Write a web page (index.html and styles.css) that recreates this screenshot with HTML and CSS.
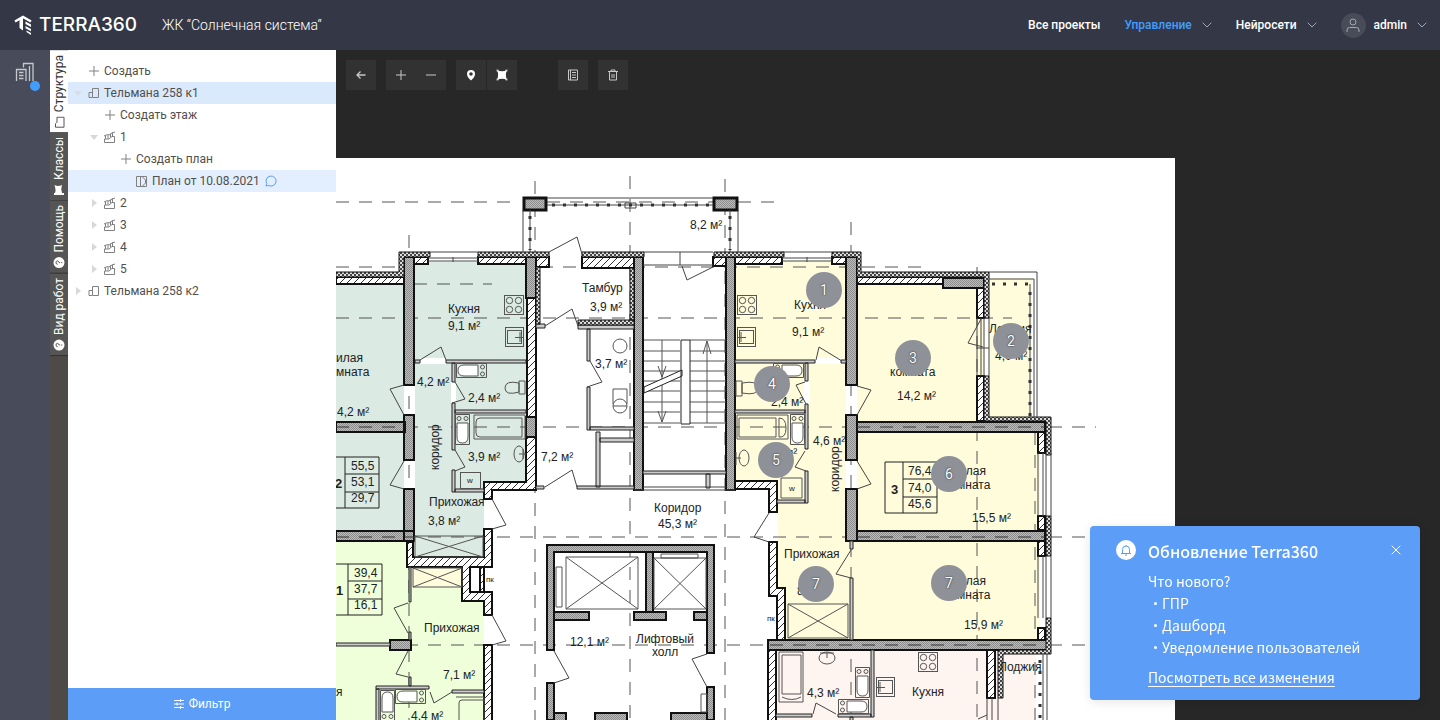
FILE: index.html
```html
<!DOCTYPE html>
<html lang="ru">
<head>
<meta charset="utf-8">
<meta name="viewport" content="width=device-width, initial-scale=1">
<title>Terra360</title>
<link rel="stylesheet" href="styles.css">
</head>
<body>
<svg class="defs" width="0" height="0" aria-hidden="true">
  <symbol id="i-plus" viewBox="0 0 12 12"><path d="M6 1v10M1 6h10" fill="none" stroke="currentColor"/></symbol>
  <symbol id="i-chevron" viewBox="0 0 10 6"><path d="M.7.7 5 5 9.300.7" fill="none" stroke="currentColor"/></symbol>
  <symbol id="i-house" viewBox="0 0 12 12"><path d="M4 10.500H1V5.500H4M4.500 10.500V1.500H10.500V10.500Z" fill="none" stroke="currentColor"/></symbol>
  <symbol id="i-floor" viewBox="0 0 12 12"><path d="M.5 8V11.500H10.500V5.500H8L5 8H.5M1.500 8V4.500M4 7.500V4M6.500 6V2.500M8.500 5V1.500M0 5 3.500 3.500 5 4 8 2 11 1" fill="none" stroke="currentColor"/></symbol>
  <symbol id="i-plan" viewBox="0 0 12 12"><path d="M.5 1.500H10.500V11.500H.5ZM4.500 1.500V11.500M6 1.500 9.500 5V8L6 11.500" fill="none" stroke="currentColor"/></symbol>
  <symbol id="i-area" viewBox="0 0 12 12"><path d="M1 1Q6 3.400 11 1Q8.800 6 11 11Q6 8.600 1 11Q3.200 6 1 1Z" fill="currentColor"/><path d="M.5.500h2v2h-2zM9.500.500h2v2h-2zM.5 9.500h2v2h-2zM9.500 9.500h2v2h-2z" fill="currentColor" opacity=".6"/></symbol>
  <symbol id="i-flag" viewBox="0 0 12 12"><path d="M1 1H3V2Q6 3.200 11 1.500Q9 5 11 9Q7 7.500 3 9V11H1Z" fill="currentColor"/></symbol>
  <symbol id="i-help" viewBox="0 0 12 12"><circle cx="6" cy="6" r="5.500" fill="#fff"/><path d="M4.300 4.700Q4.400 3 6 3T7.700 4.500Q7.700 5.400 6 6.200V7.200M6 8.200V9.300" fill="none" stroke="#555"/></symbol>
</svg>

<header class="topbar">
  <a class="logo" href="#">
    <svg class="logo-mark" width="20" height="20" viewBox="0 0 20 20" aria-hidden="true"><path d="M1 6.500 9 2 17 6.500" fill="none" stroke="#fff" stroke-width="2.400"/><path d="M5.500 4V13L9 15.500V2ZM11.500 6.500l5.500 3v2.400l-5.500-3zM11.500 11l5.500 3v2.200l-5.500-3zM12.500 15.500l4.500 2.500v2l-4.500-3z" fill="#fff"/></svg>
    <span>TERRA360</span>
  </a>
  <h1 class="project">ЖК “Солнечная система“</h1>
  <nav class="nav">
    <a href="#">Все проекты</a>
    <a href="#" class="current">Управление <svg class="chev" width="10" height="6"><use href="#i-chevron"/></svg></a>
    <a href="#">Нейросети <svg class="chev" width="10" height="6"><use href="#i-chevron"/></svg></a>
    <a href="#" class="user"><span class="avatar"><svg width="14" height="15" viewBox="0 0 14 15" aria-hidden="true"><circle cx="7" cy="4" r="3" fill="none" stroke="#a5a8b2"/><path d="M1 14V12Q1 9.500 3.500 9.500H10.500Q13 9.500 13 12V14" fill="none" stroke="#a5a8b2"/></svg></span>admin <svg class="chev" width="10" height="6"><use href="#i-chevron"/></svg></a>
  </nav>
</header>

<div class="workspace">
  <aside class="rail">
    <button class="rail-btn" aria-label="Объекты">
      <svg width="20" height="20" viewBox="0 0 20 20" aria-hidden="true"><path d="M1.500 19V7.500H11V19M8.500 5.500V1.500H18V19M14.500 4V19M4 10.500H8.500M4 13.500H8.500M4 16.500H8.500" fill="none" stroke="#c6c8ce" stroke-width="1.300"/></svg>
      <span class="dot"></span>
    </button>
  </aside>

  <div class="tabs" role="tablist">
    <button class="tab active" role="tab"><svg width="12" height="12" viewBox="0 0 12 12" aria-hidden="true"><path d="M1 2.500H4.500L6 4H11V11H1Z" fill="none" stroke="#555"/></svg>Структура</button>
    <button class="tab" role="tab"><svg width="12" height="12"><use href="#i-flag"/></svg>Классы</button>
    <button class="tab" role="tab"><svg width="12" height="12"><use href="#i-help"/></svg>Помощь</button>
    <button class="tab" role="tab"><svg width="12" height="12"><use href="#i-help"/></svg>Вид работ</button>
  </div>

  <section class="panel">
    <ul class="tree">
      <li class="row l0"><i class="arrow none"></i><svg width="12" height="12"><use href="#i-plus"/></svg>Создать</li>
      <li class="row l0 picked"><i class="arrow open pale"></i><svg width="12" height="12"><use href="#i-house"/></svg>Тельмана 258 к1</li>
      <li class="row l1"><i class="arrow none"></i><svg width="12" height="12"><use href="#i-plus"/></svg>Создать этаж</li>
      <li class="row l1"><i class="arrow open"></i><svg width="12" height="12"><use href="#i-floor"/></svg>1</li>
      <li class="row l2"><i class="arrow none"></i><svg width="12" height="12"><use href="#i-plus"/></svg>Создать план</li>
      <li class="row l3 chosen"><i class="arrow none"></i><svg width="12" height="12"><use href="#i-plan"/></svg>План от 10.08.2021 <svg class="note" width="12" height="12" viewBox="0 0 12 12" aria-hidden="true"><path d="M1 11L1.700 8.500A5 5 0 1 1 3.800 10.500Z" fill="none" stroke="#5d9df5"/></svg></li>
      <li class="row l1"><i class="arrow"></i><svg width="12" height="12"><use href="#i-floor"/></svg>2</li>
      <li class="row l1"><i class="arrow"></i><svg width="12" height="12"><use href="#i-floor"/></svg>3</li>
      <li class="row l1"><i class="arrow"></i><svg width="12" height="12"><use href="#i-floor"/></svg>4</li>
      <li class="row l1"><i class="arrow"></i><svg width="12" height="12"><use href="#i-floor"/></svg>5</li>
      <li class="row l0"><i class="arrow"></i><svg width="12" height="12"><use href="#i-house"/></svg>Тельмана 258 к2</li>
    </ul>
    <button class="filter"><svg width="10" height="10" viewBox="0 0 10 10" aria-hidden="true"><path d="M0 1.500H10M0 5H10M0 8.500H10M6.500 0V3M3 3.500V6.500M6.500 7V10" fill="none" stroke="#fff"/></svg>Фильтр</button>
  </section>

  <main class="viewer">
    <div class="tools">
      <div class="group"><button class="tool" aria-label="Назад"><svg width="12" height="12" viewBox="0 0 12 12"><path d="M10.500 6H2M5.500 2.500 2 6 5.500 9.500" fill="none" stroke="currentColor" stroke-width="1.300"/></svg></button></div>
      <div class="group"><button class="tool" aria-label="Приблизить"><svg width="12" height="12"><use href="#i-plus"/></svg></button><button class="tool" aria-label="Отдалить"><svg width="12" height="12" viewBox="0 0 12 12"><path d="M1 6H11" stroke="currentColor"/></svg></button></div>
      <div class="group split white"><button class="tool" aria-label="Точка"><svg width="12" height="12" viewBox="0 0 12 12"><path fill-rule="evenodd" d="M6 1A4 4 0 0 1 10 5Q10 8 6 11.500Q2 8 2 5A4 4 0 0 1 6 1ZM6 3.200A1.800 1.800 0 1 0 6 6.800A1.800 1.800 0 1 0 6 3.200Z" fill="currentColor"/></svg></button><button class="tool" aria-label="Область"><svg width="12" height="12"><use href="#i-area"/></svg></button></div>
      <div class="group far"><button class="tool" aria-label="Журнал"><svg width="12" height="12" viewBox="0 0 12 12"><path d="M1.500 1H10.500V11H1.500ZM3.500 1V11M5 3.500H9M5 6H9M5 8.500H9" fill="none" stroke="currentColor"/></svg></button></div>
      <div class="group"><button class="tool" aria-label="Удалить"><svg width="12" height="12" viewBox="0 0 12 12"><path d="M1 2.500H11M4 2.500V1H8V2.500M2.500 3V11H9.500V3M5 5V9M7 5V9" fill="none" stroke="currentColor"/></svg></button></div>
    </div>

    <div class="plan">
      <svg class="sheet" width="839" height="562" viewBox="336 158 839 562" role="img" aria-label="План этажа">
        <defs>
          <pattern id="g" width="2" height="2" patternUnits="userSpaceOnUse"><rect width="2" height="2" fill="#bcbcbc"/><path d="M0 0h1v1H0zM1 1h1v1H1z" fill="#8c8c8c"/></pattern>
          <pattern id="d" width="7" height="7" patternUnits="userSpaceOnUse"><rect width="7" height="7" fill="#fff"/><path d="M-1 8 8-1M-1 1 1-1M6 8 8 6" stroke="#333"/></pattern>
          <pattern id="o" width="4" height="4" patternUnits="userSpaceOnUse"><rect width="4" height="4" fill="#ddd"/><path d="M0 0h2v2H0zM2 2h2v2H2z" fill="#444"/></pattern>
          <g id="stove"><rect x=".5" y=".5" width="19" height="19"/><circle cx="5.500" cy="5.500" r="3.200"/><circle cx="14.500" cy="5.500" r="3.200"/><circle cx="5.500" cy="14.500" r="3.200"/><circle cx="14.500" cy="14.500" r="3.200"/></g>
          <g id="sink"><rect x=".5" y=".5" width="18" height="19"/><rect x="2.500" y="3.500" width="14" height="13"/><path d="M10 10.500H18M15 5V15"/></g>
          <g id="w"><rect x=".5" y=".5" width="20" height="16"/></g>
          <g id="tub"><path d="M.5.500H30.500V14.500H.5Z"/><path d="M22 2H8Q2 2 2 7.500T8 13H22Z" fill="#fff"/><circle cx="26.500" cy="4" r="2"/><circle cx="26.500" cy="11" r="2"/></g>
        </defs>
        <rect x="336" y="158" width="839" height="562" fill="#fff"/>

        <path class="mint" d="M336 284H404V262H530V486H484V557H412V534H336Z"/>
        <path class="lime" d="M336 540H410V587H463V600H484V720H336Z"/>
        <path class="cream" d="M412 568H462V587H412ZM735 262H846V284H978V278H1032V420H1040V642H777V590H777V486H735Z"/>
        <path class="rose" d="M776 650H1036V720H776Z"/>
        <path fill="#fff" d="M404 385h11v30h-11zM404 460h11v29h-11zM451 382h5v21h-5zM846 385h11v30h-11zM846 460h11v29h-11zM420 358h26v6h-26zM816 358h26v6h-26zM804 382h6v22h-6zM769 512h9v30h-9zM484 499h8v30h-8zM984 318h5v58h-5z"/>

        <g class="axis">
          <path d="M336 202H520M547 202H713M738 202H775M336 267H396M540 267H925M414 284H492M336 318H1012M336 427H1096M336 537H1100M336 645H1100"/>
          <path d="M409 235V720M535 181V720M630 176V720M725 179V720M851 222V720M977 267V720M1035 432V720"/>
        </g>

        <g class="grey">
          <path d="M404 257h10v128h-10zM404 415h10v45h-10zM404 489h10v52h-10zM336 422h69v10h-69zM336 531h78v10h-78zM526 257h10v41h-10zM526 417h10v20h-10zM634 257h9v233h-9zM726 257h9v233h-9zM846 257h11v128h-11zM846 415h11v45h-11zM846 489h11v52h-11zM943 278h41v10h-41zM857 422h188v10h-188zM857 531h188v10h-188zM768 640h280v10h-280zM390 640h21v10h-21z"/>
          <path d="M547 545H714V653H707V552H554V650H547ZM547 683h7v37h-7zM707 687h7v33h-7zM646 552h7v60h-7zM554 612h35v8h-35zM634 612h32v8h-32zM694 612h13v8h-13zM554 713h12v10h-12zM595 713h32v10h-32zM671 713h36v10h-36z"/>
          <path class="post" d="M524 198h22v12h-22zM714 198h23v12h-23z"/>
        </g>
        <path class="axis-thin" d="M336 427H404M857 427H1045M336 537H414M857 537H1045M770 645H1045"/>
        <g class="diag">
          <path d="M414 257h14v7h-14zM478 257h48v7h-48zM336 277h68v7h-68zM527 298h9v119h-9zM526 437h10v53H492v9h-8v-17h42zM484 529h8v38h-22v25h22v23h-8v-14h-22v-34h-55v-25h6v15h71zM480 567h4v25h-4zM484 645h8v78h-8zM536 257h13v10h-13zM582 257h52v11h-52zM735 257h47v7h-47zM832 257h14v7h-14zM713 257h13v9h-13zM857 277h86v7h-86zM977 288h7v30h-7zM977 376h7v45h-7zM1038 432h7v21h-7zM1038 516h7v14h-7zM1038 541h7v15h-7zM1038 628h7v12h-7z"/>
          <path d="M735 481h42v31h-8v-23h-34zM769 542h8v46h8v52h-8v-44h-8zM768 650h8v73h-8zM987 650h8v48h-8z"/>
        </g>
        <g class="slim">
          <path d="M415 360h5v3h-5zM446 360h80v3h-80zM452 363h3v19h-3zM452 403h3v47h-3zM455 410h71v3h-71zM452 470h3v22h-3zM455 489h29v3h-29zM409 567h2v35h-2zM409 632h2v8h-2zM336 643h54v3h-54zM409 677h2v9h-2zM376 686h53v3h-53zM376 689h3v34h-3zM452 690h32v3h-32z"/>
          <path d="M536 324h9v4h-9zM578 325h56v4h-56zM587 329h3v32h-3zM587 387h3v43h-3zM590 427h44v3h-44zM596 432h4v55h-4zM600 438h34v4h-34zM577 486h57v3h-57zM536 486h8v3h-8zM643 471h83v3h-83zM706 474h4v14h-4z"/>
          <path d="M735 360h80v3h-80zM841 360h5v3h-5zM805 363h3v18h-3zM805 404h3v45h-3zM735 410h70v3h-70zM805 471h3v32h-3zM777 500h28v3h-28zM850 541h3v8h-3zM850 578h3v62h-3zM871 650h3v67h-3zM776 714h36v3h-36zM838 714h33v3h-33zM850 717h3v5h-3z"/>
        </g>
        <g class="dots">
          <path d="M399 252h31v5h-26v20h-68v-5h63zM478 252h71v5h-71zM582 252h62v5h-62zM536 267h4v57h-4zM630 268h4v52h-4zM578 320h56v5h-56zM714 252h70v5h-70zM832 252h29v20h128v46h-5v-41h-127v-20h-25zM984 376h5v41h62v38h-5v-34h-62zM1046 516h5v40h-5zM1046 618h5v36h-48v44h-5v-48h48z"/>
        </g>

        <path class="line" d="M428 252H478M428 258H478M428 261H478M453 257V262M782 252H832M782 258H832M782 261H832M807 257V262M523 210V252M738 210V252M530 210V252M730 210V252M547 198H713M547 205H713M625 203H636V208H625ZM643 252H713M643 265H713M680 252V265M643 487H726M634 490H735"/>
        <path class="line" d="M989 272H1037V418M989 279H1034V418M1030 284V418M977 318V376M981 318V376M984 318V376M989 318V376M977 348H989M1038 453V516M1043 453V516M1046 453V516M1051 453V516M1038 556V618M1043 556V618M1046 556V618M1051 556V618M1043 654V720M1047 654V720M987 698V720M992 698V720M998 698V720"/>
        <path class="beads" d="M530 216V250M730 216V250M552 205H712M992 284H1030M1030 292V416M1040 660V720"/>

        <path class="line" d="M420 360 441 347 446 360M455 382 465 399 452 403M404 385 390 389 404 415M404 461 390 485 404 489M455 450 465 467 455 471M492 499 506 525 492 529M492 615 506 641 492 645M408 603 394 608 408 633M408 651 396 674 408 677M430 692 434 703 452 692M549 252 577 237 582 254M545 326 572 309 578 326M682 266 687 280 713 267M590 361 602 382 587 387M545 487 572 470 577 487M554 651 569 678 554 683M707 654 692 659 707 687M769 513 754 537 769 542M816 360 819 347 842 361M805 382 796 385 806 404M805 451 795 467 806 471M857 386 871 390 857 415M857 461 871 484 857 489M981 319 968 343 983 347M851 550 836 574 851 578M813 714 816 703 836 714M978 719 987 715"/>

        <g class="fixture">
          <path d="M415 536H483V557H415ZL483 557M415 557 483 536M413 568H462V587H413ZL462 587M413 587 462 568M788 604H848V638H788ZL848 638M788 638 848 604"/>
          <path d="M566 557H638V609H566ZL638 609M566 609 638 557M654 558H706V609H654ZL706 609M654 609 706 558M556 567H562V607H556ZM661 554H698V558H661ZM701 694H707V712H701Z"/>
          <path d="M644 340H680M644 351H680M644 361H680M644 371H680M644 381H680M644 391H680M644 402H680M644 412H680M644 423H680M690 340H726M690 351H726M690 361H726M690 371H726M690 381H726M690 391H726M690 402H726M690 412H726M690 423H726M662 340V422M658 366 662 377 666 366M658 411 662 422 666 411M707 423V341M703 354 707 341 711 354"/>
          <path class="stair" d="M644 387 682 370V376L644 393ZM681 340H690V424H681Z"/>
          <circle cx="620" cy="346" r="7"/><circle cx="620" cy="406" r="7"/><path d="M613 404V389H627V404M613 406H627"/>
          <use href="#stove" x="504" y="295"/><use href="#sink" x="505" y="327"/>
          <use href="#stove" x="737" y="295"/><use href="#sink" transform="translate(756 327) scale(-1 1)"/>
          <use href="#stove" x="918" y="652"/><use href="#sink" transform="translate(895 677) scale(-1 1)"/>
          <use href="#tub" x="456" y="363"/><use href="#tub" transform="translate(804 363) scale(-1 1)"/>
          <use href="#tub" transform="translate(470 414) rotate(90) scale(-1 1) translate(-31 0)"/>
          <use href="#tub" transform="translate(805 414) rotate(90) scale(-1 1) translate(-31 0)"/>
          <use href="#tub" x="395" y="689"/><use href="#tub" transform="translate(395 690) rotate(90)"/>
          <use href="#tub" transform="translate(870 667) rotate(90) scale(-1 1) translate(-31 0)"/><use href="#tub" transform="translate(869 699) scale(-1 1)"/>
          <path d="M474 415H525V439H474ZM480 418H522V437H480Q476 437 476 433V422Q476 418 480 418ZM737 415H788V439H737ZM739 418H776V437H739ZM779 418Q786 418 786 428T779 437ZM779 652H803V702H779ZM782 655H801V694H782ZM782 697Q792 702 801 697M456 697H484V720M459 720V703Q459 700 462 700H484"/>
          <path d="M519 381H525V394H519ZM519 383Q505 380 505 388T519 392ZM736 381H742V396H736ZM742 383Q758 380 758 388T742 393Z"/>
          <ellipse cx="519" cy="454" rx="5" ry="8"/><path d="M519 454H526M523 449V459"/><ellipse cx="744" cy="458" rx="5" ry="8"/><path d="M736 452V465M736 458H741"/>
          <ellipse cx="827" cy="658" rx="8" ry="6"/><path d="M820 653H834M827 653V658"/>
          <use href="#w" x="460" y="472"/><path d="M781 478H802V498H781Z"/>
        </g>
        <path class="table" d="M336 457H379V508H336M345 457V508M345 474H379M345 492H379M336 564H382V615H336M348 564V615M348 581H382M348 599H382M885 462H937V513H885ZM903 462V513M903 479H937M903 497H937"/>

        <g class="labels">
          <text x="336" y="362">илая</text><text x="336" y="376">мната</text><text x="337" y="416">4,2 м²</text>
          <text x="448" y="313">Кухня</text><text x="448" y="330">9,1 м²</text>
          <text x="417" y="386">4,2 м²</text><text x="468" y="402">2,4 м²</text><text x="468" y="461">3,9 м²</text>
          <text transform="translate(439 470) rotate(-90)">коридор</text>
          <text x="429" y="506">Прихожая</text><text x="428" y="525">3,8 м²</text>
          <text x="351" y="470">55,5</text><text x="351" y="486">53,1</text><text x="351" y="502">29,7</text>
          <text class="b" x="335" y="488">2</text><text class="b" x="336" y="595">1</text><text class="b" x="891" y="494">3</text>
          <text x="354" y="577">39,4</text><text x="354" y="593">37,7</text><text x="354" y="609">16,1</text>
          <text x="424" y="632">Прихожая</text><text x="443" y="679">7,1 м²</text><text x="411" y="720">4,4 м²</text><text x="336" y="696">я</text>
          <text class="s" x="486" y="582">пк</text><text class="s" x="767" y="621">пк</text>
          <text class="s" x="467" y="483">w</text><text class="s" x="789" y="491">w</text>
          <text x="690" y="229">8,2 м²</text><text x="582" y="292">Тамбур</text><text x="590" y="311">3,9 м²</text>
          <text x="595" y="368">3,7 м²</text><text x="541" y="461">7,2 м²</text>
          <text x="654" y="512">Коридор</text><text x="658" y="528">45,3 м²</text>
          <text x="570" y="646">12,1 м²</text><text x="636" y="643">Лифтовый</text><text x="652" y="656">холл</text>
          <text x="794" y="309">Кухня</text><text x="792" y="336">9,1 м²</text><text x="771" y="406">2,4 м²</text>
          <text x="813" y="445">4,6 м²</text><text transform="translate(839 492) rotate(-90)">коридор</text><text x="765" y="457">3,9 м²</text>
          <text x="890" y="376">комната</text><text x="897" y="400">14,2 м²</text>
          <text x="989" y="333">Лоджия</text><text x="995" y="360">4,0 м²</text>
          <text x="908" y="475">76,4</text><text x="908" y="492">74,0</text><text x="908" y="508">45,6</text>
          <text x="948" y="475">Жилая</text><text x="945" y="489">комната</text><text x="972" y="522">15,5 м²</text>
          <text x="784" y="558">Прихожая</text><text x="797" y="595">8,0 м²</text>
          <text x="948" y="585">Жилая</text><text x="945" y="599">комната</text><text x="964" y="629">15,9 м²</text>
          <text x="807" y="697">4,3 м²</text><text x="912" y="696">Кухня</text><text x="999" y="671">Лоджия</text>
        </g>
      </svg>
      <button class="pin p1">1</button>
      <button class="pin p2">2</button>
      <button class="pin p3">3</button>
      <button class="pin p4">4</button>
      <button class="pin p5">5</button>
      <button class="pin p6">6</button>
      <button class="pin p7">7</button>
      <button class="pin p8">7</button>
    </div>
  </main>
</div>

<aside class="toast" role="status">
  <span class="bell"><svg width="12" height="12" viewBox="0 0 12 12" aria-hidden="true"><path d="M2.500 9.500V5.500A3.500 3.500 0 0 1 9.500 5.500V9.500M1 9.500H11M5 11H7M6 1V2" fill="none" stroke="#5c9df8"/></svg></span>
  <div class="toast-body">
    <h2>Обновление Terra360</h2>
    <p>Что нового?</p>
    <ul>
      <li>ГПР</li>
      <li>Дашборд</li>
      <li>Уведомление пользователей</li>
    </ul>
    <a href="#">Посмотреть все изменения</a>
  </div>
  <button class="close" aria-label="Закрыть"><svg width="10" height="10" viewBox="0 0 10 10"><path d="M.7.7 9.300 9.300M9.300.7.7 9.300" stroke="#fff"/></svg></button>
</aside>
</body>
</html>
```
FILE: styles.css
```css
* { box-sizing: border-box; }

body {
  margin: 0;
  height: 100vh;
  display: flex;
  flex-direction: column;
  overflow: hidden;
  background: #272727;
  font: 12px/22px Roboto, "Noto Sans", sans-serif;
  color: #505050;
}

button {
  border: 0;
  padding: 0;
  font: inherit;
  color: inherit;
  background: none;
  cursor: pointer;
}

a { color: inherit; text-decoration: none; }
ul { list-style: none; margin: 0; padding: 0; }
svg { flex: none; }
.defs { position: absolute; }

/* Top bar */
.topbar {
  flex: none;
  height: 50px;
  display: flex;
  align-items: center;
  padding: 0 13px 0 14px;
  background: #343846;
  color: #fff;
}
.logo {
  display: flex;
  align-items: center;
  gap: 5px;
  font: 500 19px/24px Inter, sans-serif;
}
.project {
  margin: 0 0 0 25px;
  font-size: 14px;
  font-weight: 300;
}
.nav {
  margin-left: auto;
  display: flex;
  align-items: center;
  gap: 24px;
  font-weight: 500;
}
.nav a { display: flex; align-items: center; }
.nav .current { color: #409eff; }
.chev { margin-left: 10px; color: #a3a6b0; }
.avatar {
  width: 25px;
  height: 25px;
  margin-right: 8px;
  border-radius: 50%;
  background: #484c59;
  display: grid;
  place-items: center;
}

/* Left columns */
.workspace { flex: 1; display: flex; min-height: 0; }
.rail { width: 50px; flex: none; background: #484c5a; }
.rail-btn { position: relative; display: block; margin: 12px 0 0 15px; height: 24px; }
.dot {
  position: absolute;
  right: -5px;
  bottom: -5px;
  width: 10px;
  height: 10px;
  border-radius: 50%;
  background: #409eff;
}
.tabs { width: 18px; flex: none; background: #4d4a48; }
.tab {
  width: 18px;
  display: flex;
  align-items: center;
  gap: 4px;
  padding: 4px 0;
  writing-mode: vertical-rl;
  transform: rotate(180deg);
  line-height: 18px;
  color: #fff;
  background: #555;
  border-top: 1px solid #333;
}
.tab svg { transform: rotate(90deg); }
.tab.active { padding-bottom: 5px; color: #333; background: #fff; }

.panel {
  width: 268px;
  flex: none;
  display: flex;
  flex-direction: column;
  background: #fff;
}
.tree { flex: 1; padding-top: 10px; }
.row {
  height: 22px;
  display: flex;
  align-items: center;
  padding-left: 8px;
  white-space: nowrap;
}
.row svg { margin-right: 4px; color: #808080; }
.row .note { margin: 0 0 0 5px; }
.l1 { padding-left: 24px; }
.l2 { padding-left: 40px; }
.l3 { padding-left: 56px; }
.picked { background: #dbe9fd; }
.chosen { background: #e3eefe; }
.arrow {
  width: 5px;
  height: 8px;
  margin-right: 7px;
  border: solid transparent;
  border-width: 4px 0 4px 5px;
  border-left-color: #d8d8d8;
}
.arrow.open {
  width: 8px;
  height: 5px;
  margin: 0 6px 0 -2px;
  border-width: 5px 4px 0;
  border-color: #d8d8d8 transparent transparent;
}
.arrow.open.pale { border-top-color: #d9dde4; }
.arrow.none { border-color: transparent; }
.filter {
  height: 32px;
  display: flex;
  align-items: center;
  justify-content: center;
  gap: 5px;
  background: #5c9df8;
  color: #fff;
}

/* Viewer */
.viewer { flex: 1; position: relative; overflow: hidden; background: #272727; }
.tools { position: relative; display: flex; gap: 10px; padding: 10px; }
.group { display: flex; background: #323232; color: #c8c8c8; }
.split { gap: 1px; background: #272727; }
.split .tool { background: #323232; }
.white { color: #fff; }
.far { margin-left: 31px; }
.tool { width: 30px; height: 30px; display: grid; place-items: center; }

.plan { position: absolute; left: 0; top: 108px; }
.sheet { display: block; }
.mint { fill: #dbeae2; }
.lime { fill: #eeffd9; }
.cream { fill: #fffcdc; }
.rose { fill: #fff5f0; }
.axis { fill: none; stroke: #555; stroke-dasharray: 13 10; }
.axis-thin { fill: none; stroke: #333; stroke-dasharray: 13 10; }
.grey { fill: url(#g); stroke: #111; stroke-width: 2; }
.post { stroke-width: 3; }
.diag { fill: url(#d); stroke: #111; stroke-width: 2; }
.slim { fill: #ccc; stroke: #222; }
.dots { fill: url(#o); stroke: #111; }
.line { fill: none; stroke: #444; }
.beads { fill: none; stroke: #333; stroke-width: 3; stroke-dasharray: 3 8; }
.fixture { fill: none; stroke: #555; }
.stair { fill: #fff; stroke: #222; }
.table { fill: none; stroke: #222; }
.labels { font: 12px "Liberation Sans", Arial, sans-serif; fill: #222; }
.labels .b { font-weight: 700; font-size: 13px; }
.labels .s { font-size: 8px; }

.pin {
  position: absolute;
  width: 36px;
  height: 36px;
  border-radius: 50%;
  background: #8f9199;
  color: #fff;
  font-size: 14px;
  text-shadow: 0 0 1px #333, 0 0 2px #444;
}
.p1 { left: 470px; top: 114px; }
.p2 { left: 657px; top: 165px; }
.p3 { left: 559px; top: 182px; }
.p4 { left: 418px; top: 208px; }
.p5 { left: 422px; top: 284px; }
.p6 { left: 595px; top: 298px; }
.p7 { left: 462px; top: 408px; }
.p8 { left: 595px; top: 407px; }

/* Notification */
.toast {
  position: fixed;
  right: 20px;
  bottom: 20px;
  width: 330px;
  display: flex;
  align-items: flex-start;
  gap: 12px;
  padding: 14px 19px 12px 26px;
  border-radius: 4px;
  background: #5c9df8;
  box-shadow: 0 2px 12px rgba(0, 0, 0, 0.1);
  color: #fff;
  font: 14px/22px "Noto Sans CJK SC", sans-serif;
}
.bell {
  width: 20px;
  height: 20px;
  border-radius: 50%;
  background: #fff;
  display: grid;
  place-items: center;
}
.toast-body { flex: 1; }
.toast h2 { margin: 0 0 8px; font-size: 16px; font-weight: 500; }
.toast p { margin: 0; }
.toast li { padding-left: 14px; position: relative; }
.toast li::before {
  content: "";
  position: absolute;
  left: 6px;
  top: 10px;
  width: 3px;
  height: 3px;
  border-radius: 50%;
  background: #fff;
}
.toast a { display: inline-block; margin-top: 8px; text-decoration: underline; text-underline-offset: 3px; }
.close { display: grid; margin-top: 5px; }
```
